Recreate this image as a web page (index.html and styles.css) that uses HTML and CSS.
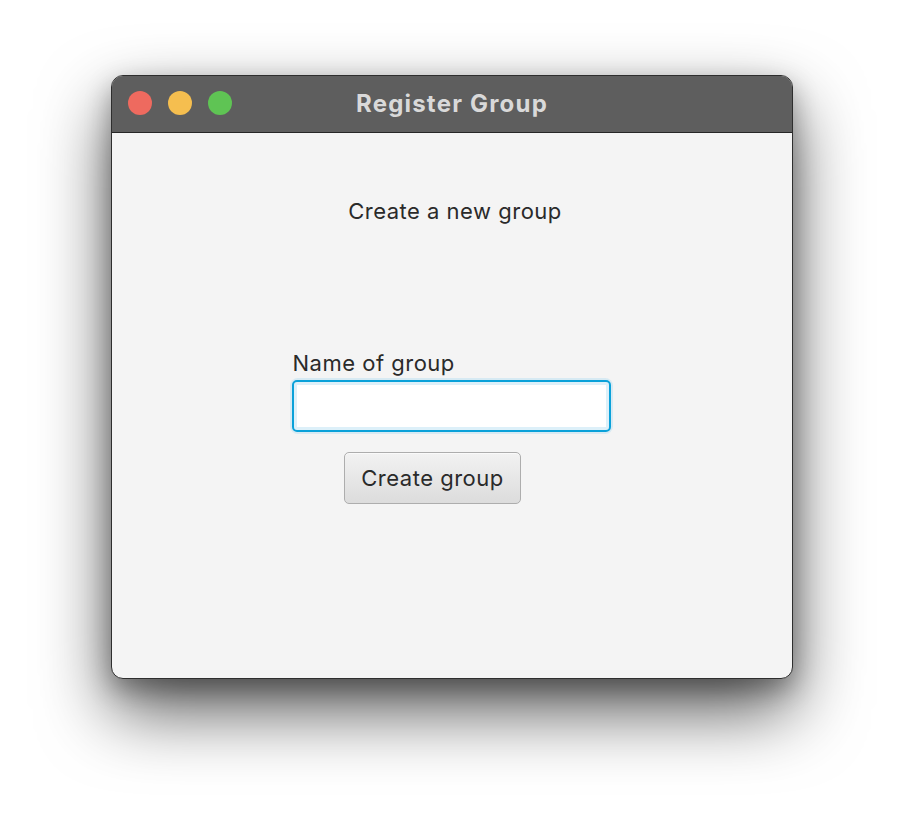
FILE: index.html
```html
<!DOCTYPE html>
<html>
<head>
<meta charset="utf-8">
<link rel="stylesheet" href="styles.css">
</head>
<body>
<div class="desktop">
  <div class="window">
    <div class="titlebar">
      <div class="lights">
        <span class="light red"></span>
        <span class="light yellow"></span>
        <span class="light green"></span>
      </div>
      <div class="title">Register Group</div>
    </div>
    <div class="content">
      <div class="heading">Create a new group</div>
      <div class="form">
        <label class="label">Name of group</label>
        <div class="field"><input class="input" type="text"></div>
        <button class="btn">Create group</button>
      </div>
    </div>
  </div>
</div>
</body>
</html>
```
FILE: styles.css
```css
html, body {
  margin: 0;
  padding: 0;
  background: #ffffff;
}
.desktop {
  width: 904px;
  height: 826px;
  padding: 75px 0 0 111px;
  box-sizing: border-box;
}
.window {
  width: 682px;
  height: 604px;
  border-radius: 12px;
  background: #f4f4f4;
  border: 1px solid #2e2e2e;
  box-sizing: border-box;
  overflow: hidden;
  box-shadow: 0 32px 70px rgba(0,0,0,0.65), 0 10px 26px rgba(0,0,0,0.3);
  display: flex;
  flex-direction: column;
  font-family: Inter, "Liberation Sans", sans-serif;
}
.titlebar {
  height: 57px;
  flex: none;
  box-sizing: border-box;
  background: #5e5e5e;
  border-bottom: 1px solid #262626;
  display: flex;
  align-items: center;
  position: relative;
}
.lights {
  display: flex;
  gap: 16px;
  padding-left: 16px;
  position: absolute;
  left: 0;
  top: 15px;
}
.light {
  width: 24px;
  height: 24px;
  border-radius: 50%;
  display: block;
}
.red { background: #ee6a5f; }
.yellow { background: #f5be4f; }
.green { background: #5fc454; }
.title {
  flex: 1;
  text-align: center;
  color: #d9d9d9;
  font-weight: 700;
  font-size: 24px;
  letter-spacing: 1.2px;
  margin-top: -2px;
}
.content {
  flex: 1;
  display: flex;
  flex-direction: column;
  align-items: center;
}
.heading {
  margin-top: 63px;
  font-size: 22px;
  color: #2a2a2a;
  line-height: 30px;
  margin-left: 6px;
  letter-spacing: 0.5px;
}
.form {
  margin-top: 122px;
  display: flex;
  flex-direction: column;
  align-items: flex-start;
  width: 320px;
  margin-right: 1px;
}
.label {
  font-size: 22px;
  color: #2a2a2a;
  line-height: 30px;
  margin-left: 1px;
  letter-spacing: 0.5px;
}
.field {
  margin-top: 2px;
  padding: 0;
  border-radius: 6px;
  box-shadow: 0 0 0 2px rgba(160, 215, 240, 0.35);
}
.input {
  display: block;
  width: 319px;
  height: 52px;
  box-sizing: border-box;
  border: 2px solid #0aa1d9;
  border-radius: 5px;
  background: #ffffff;
  box-shadow: inset 0 0 0 3px #ddf0f9;
  outline: none;
  margin: 0;
  padding: 0 8px;
  font-family: inherit;
  font-size: 20px;
}
.btn {
  margin-top: 20px;
  margin-left: 52px;
  width: 177px;
  height: 52px;
  box-sizing: border-box;
  border: 1px solid #adadad;
  border-radius: 5px;
  background: linear-gradient(#f2f2f2, #dcdcdc);
  box-shadow: inset 0 1px 0 #fafafa;
  font-family: inherit;
  font-size: 22px;
  color: #2a2a2a;
  padding: 0 0 0 1px;
  letter-spacing: 0.5px;
}
```
